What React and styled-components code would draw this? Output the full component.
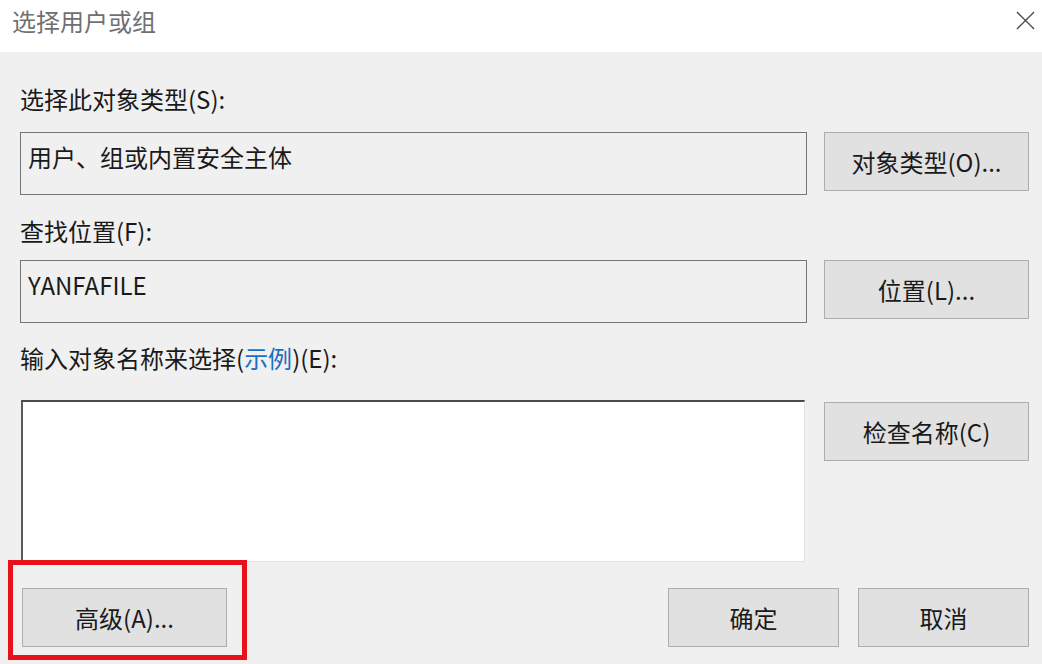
import React from 'react';
import styled, { createGlobalStyle } from 'styled-components';

const GlobalStyle = createGlobalStyle`
  html, body {
    margin: 0;
    padding: 0;
    background: #f0f0f0;
  }
  body {
    font-family: "Noto Sans CJK SC", "Noto Sans", sans-serif;
    color: #1a1a1a;
  }
`;

const Window = styled.div`
  position: relative;
  width: 1042px;
  height: 664px;
  display: flex;
  flex-direction: column;
  background: #f0f0f0;
  overflow: hidden;
`;

const TitleBar = styled.div`
  height: 52px;
  flex: none;
  background: #ffffff;
  display: flex;
  justify-content: space-between;
  align-items: flex-start;
  padding: 5px 2px 0 12px;
  box-sizing: border-box;
`;

const Title = styled.div`
  font-size: 24px;
  line-height: 32px;
  color: #707070;
`;

const CloseButton = styled.button`
  width: 30px;
  height: 30px;
  padding: 0;
  border: none;
  background: transparent;
  display: flex;
  align-items: center;
  justify-content: center;
  color: #4a4a4a;
`;

const Body = styled.div`
  flex: 1;
  display: flex;
  flex-direction: column;
  padding: 0 13px 0 20px;
`;

const Label = styled.div`
  font-size: 24px;
  line-height: 30px;
  height: 30px;
  margin-top: ${(p) => p.$top}px;
  white-space: nowrap;
`;

const Link = styled.span`
  color: #1a6fc4;
`;

const Row = styled.div`
  display: flex;
  align-items: ${(p) => (p.$top ? 'flex-start' : 'center')};
  gap: 17px;
  margin-top: ${(p) => p.$top || 0}px;
`;

const Field = styled.div`
  width: 787px;
  height: 63px;
  box-sizing: border-box;
  border: 1px solid #767676;
  background: #f0f0f0;
  padding: 9px 7px;
  font-size: 24px;
  line-height: 30px;
  white-space: nowrap;
`;

const TextArea = styled.div`
  width: 785px;
  height: 162px;
  margin-left: 1px;
  box-sizing: border-box;
  background: #ffffff;
  border-top: 2px solid #4a4a4a;
  border-left: 2px solid #5a5a5a;
  border-right: 1px solid #e2e2e2;
  border-bottom: 1px solid #e2e2e2;
`;

const Button = styled.button`
  width: ${(p) => p.$w || 205}px;
  height: 59px;
  flex: none;
  box-sizing: border-box;
  border: 1px solid #adadad;
  background: #e1e1e1;
  font-family: inherit;
  font-size: 24px;
  line-height: 30px;
  color: #1a1a1a;
  padding: 0;
  margin-top: ${(p) => p.$mt || 0}px;
  margin-left: ${(p) => p.$ml || 0}px;
`;

const Footer = styled.div`
  display: flex;
  align-items: center;
  gap: 19px;
  margin-top: 26px;
`;

const Spacer = styled.div`
  flex: 1;
`;

const Highlight = styled.div`
  position: absolute;
  left: 8px;
  top: 560px;
  width: 239px;
  height: 100px;
  box-sizing: border-box;
  border: 5px solid #e8121c;
  pointer-events: none;
`;

export default function App() {
  return (
    <>
      <GlobalStyle />
      <Window>
        <TitleBar>
          <Title>选择用户或组</Title>
          <CloseButton aria-label="关闭">
            <svg width="19" height="19" viewBox="0 0 20 20" fill="none" stroke="currentColor" strokeWidth="1.4">
              <path d="M1 1L19 19M19 1L1 19" />
            </svg>
          </CloseButton>
        </TitleBar>
        <Body>
          <Label $top={32}>选择此对象类型(S):</Label>
          <Row $top={18}>
            <Field>用户、组或内置安全主体</Field>
            <Button>对象类型(O)...</Button>
          </Row>

          <Label $top={21}>查找位置(F):</Label>
          <Row $top={14}>
            <Field>YANFAFILE</Field>
            <Button>位置(L)...</Button>
          </Row>

          <Label $top={20}>
            输入对象名称来选择(<Link>示例</Link>)(E):
          </Label>
          <Row $top={27}>
            <TextArea />
            <Button $mt={2} $ml={2}>检查名称(C)</Button>
          </Row>

          <Footer>
            <Button $ml={2}>高级(A)...</Button>
            <Spacer />
            <Button $w={171}>确定</Button>
            <Button $w={171}>取消</Button>
          </Footer>
        </Body>
        <Highlight />
      </Window>
    </>
  );
}
